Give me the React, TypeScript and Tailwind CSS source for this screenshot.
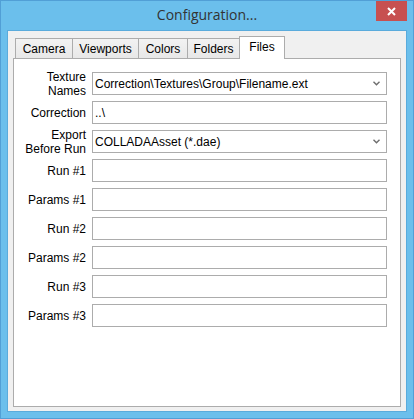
type Row = {
  label: string[];
  value?: string;
  select?: boolean;
};

const tabs = [
  { name: "Camera", w: "w-[58px]" },
  { name: "Viewports", w: "w-[67px]" },
  { name: "Colors", w: "w-[50px]" },
  { name: "Folders", w: "w-[53px]" },
];

const rows: Row[] = [
  { label: ["Texture", "Names"], value: "Correction\\Textures\\Group\\Filename.ext", select: true },
  { label: ["Correction"], value: "..\\" },
  { label: ["Export", "Before Run"], value: "COLLADAAsset (*.dae)", select: true },
  { label: ["Run #1"] },
  { label: ["Params #1"] },
  { label: ["Run #2"] },
  { label: ["Params #2"] },
  { label: ["Run #3"] },
  { label: ["Params #3"] },
];

const Chevron = () => (
  <svg width="7" height="5" viewBox="0 0 7 5" className="shrink-0">
    <path d="M0.5 0.8 L3.5 3.8 L6.5 0.8" fill="none" stroke="#6d6d6d" strokeWidth="1.4" />
  </svg>
);

const App = () => {
  return (
    <div className="w-[414px] h-[419px] bg-[#6bbfec] border border-[#519fd6] flex flex-col font-['Liberation_Sans',Arial,sans-serif] text-[12px] text-black">
      {/* title bar */}
      <div className="h-[29px] grid grid-cols-[1fr_auto_1fr] items-center">
        <div />
        <div className="font-['Open_Sans',sans-serif] text-[14px] text-[#333333] leading-none pb-px">Configuration...</div>
        <div className="flex justify-end self-start">
          <div className="w-[31px] h-[20px] bg-[#c75050] mr-[6px] flex items-center justify-center">
            <svg width="9" height="9" viewBox="0 0 9 9">
              <path d="M1 1 L8 8 M8 1 L1 8" stroke="#ffffff" strokeWidth="2" />
            </svg>
          </div>
        </div>
      </div>

      {/* client area */}
      <div className="mx-[6px] h-[382px] border border-[#5aabdc] bg-[#f0f0f0] flex flex-col px-[5px] pt-[5px] pb-[4px]">
        <div className="flex items-end pl-[2px]">
          {tabs.map((t, i) => (
            <div
              key={t.name}
              className={`${t.w} h-[20px] ${i > 0 ? "-ml-px" : ""} border-x border-t border-[#acacac] bg-gradient-to-b from-[#f2f2f2] to-[#e8e8e8] flex items-center justify-center leading-none`}
            >
              {t.name}
            </div>
          ))}
          <div className="w-[46px] h-[23px] -ml-px -mb-px relative z-10 border-x border-t border-[#acacac] bg-white flex items-center justify-center leading-none pb-[2px]">
            Files
          </div>
        </div>

        <div className="flex-1 bg-white border border-[#acacac] pt-[13px]">
          <div className="grid grid-cols-[72px_295px] gap-x-[6px] gap-y-[6px]">
            {rows.map((r) => (
              <div key={r.label.join(" ")} className="contents">
                <div className="h-[23px] flex flex-col justify-center items-end text-right leading-[14px] whitespace-nowrap">
                  {r.label.map((l) => (
                    <span key={l}>{l}</span>
                  ))}
                </div>
                <div className="h-[23px] border border-[#acacac] bg-white flex items-center pl-[2px] pr-[6px]">
                  <span className="flex-1 leading-none whitespace-nowrap">{r.value ?? ""}</span>
                  {r.select && <Chevron />}
                </div>
              </div>
            ))}
          </div>
        </div>
      </div>
    </div>
  );
};

export default App;
